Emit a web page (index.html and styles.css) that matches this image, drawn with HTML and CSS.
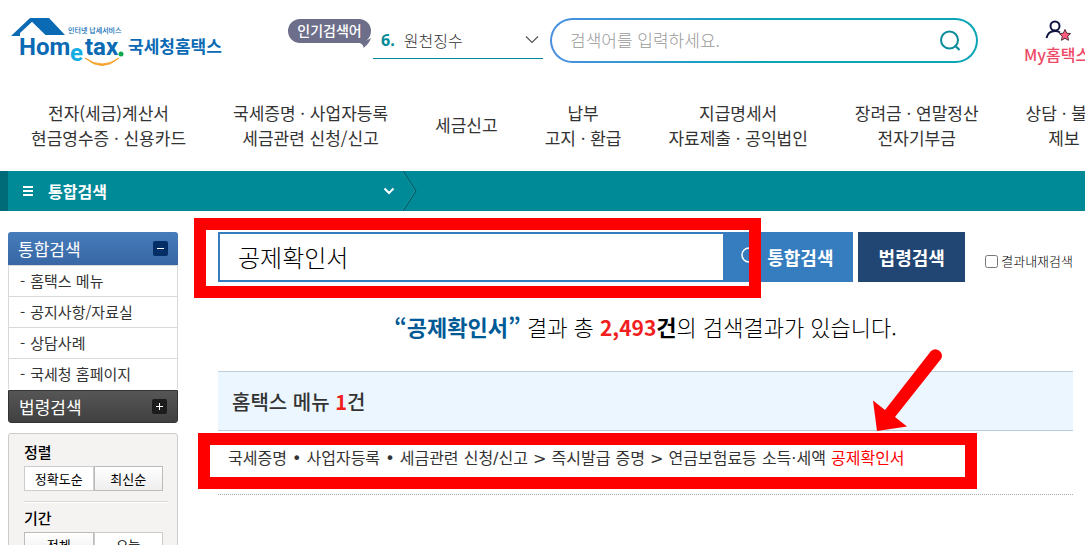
FILE: index.html
```html
<!DOCTYPE html>
<html lang="ko">
<head>
<meta charset="utf-8">
<title>통합검색 | 국세청 홈택스</title>
<link rel="stylesheet" href="styles.css">
</head>
<body>
<div class="page">
  <header class="top">
    <a class="logo" href="#" aria-label="국세청홈택스">
      <svg width="212" height="54" viewBox="0 0 212 54">
        <path d="M0 21 L19 3 H38 L54 20 H34.500 L21 7 L9 18 V21Z" fill="#0a6ab4"/>
        <path d="M9 20 L21 7.500 L33 20" fill="none" stroke="#fff" stroke-width="1"/>
        <text class="logo-sub" x="57" y="18">인터넷 납세서비스</text>
        <text class="logo-en" x="8" y="40">Hom</text>
        <text class="logo-en logo-e" x="59" y="46">e</text>
        <text class="logo-en" x="74" y="40">tax</text>
        <circle cx="110" cy="39" r="2.500" fill="#12a84c"/>
        <path d="M74 43 Q91 55 108 43 Q91 58 74 43Z" fill="#f5a32c" stroke="#f5a32c"/>
        <text class="logo-ko" x="117" y="38">국세청홈택스</text>
      </svg>
    </a>
    <div class="popular">
      <span class="bubble">인기검색어
        <svg class="bubble-tail" width="14" height="10" viewBox="0 0 14 10"><path d="M0 4 Q8 4 14 0 Q12 6 6.500 10 Q7 6 0 4Z" fill="#6d6e8a"/></svg>
      </span>
      <button class="keyword" type="button" aria-haspopup="listbox">
        <strong>6.</strong><span>원천징수</span>
        <svg width="14" height="9" viewBox="0 0 14 9"><path d="M1 1.500 L7 7.500 L13 1.500" fill="none" stroke="#555" stroke-width="1.200"/></svg>
      </button>
    </div>
    <form class="pill">
      <input type="text" placeholder="검색어를 입력하세요." aria-label="검색어">
      <button type="button" aria-label="검색">
        <svg width="22" height="22" viewBox="0 0 22 22"><circle cx="10.500" cy="10" r="8.500" fill="none" stroke="#0a8c9b" stroke-width="2"/><path d="M16 15.500 L20.500 20" stroke="#0a8c9b" stroke-width="2.200"/></svg>
      </button>
    </form>
    <a class="my" href="#">
      <svg width="26" height="22" viewBox="0 0 26 22"><circle cx="10" cy="6" r="4.500" fill="none" stroke="#10153f" stroke-width="2"/><path d="M1.500 18 Q3 11 10 11 Q13 11 15 12.500" fill="none" stroke="#10153f" stroke-width="2"/><path d="M20 9.500 L21.700 13.200 L25.600 13.600 L22.700 16.300 L23.500 20.300 L20 18.300 L16.500 20.300 L17.300 16.300 L14.400 13.600 L18.300 13.200Z" fill="#ff5c7c" stroke="#4a2a38" stroke-width="1"/></svg>
      <span>My홈택스</span>
    </a>
  </header>

  <nav class="menu">
    <a href="#">전자(세금)계산서<br>현금영수증 · 신용카드</a>
    <a href="#">국세증명 · 사업자등록<br>세금관련 신청/신고</a>
    <a href="#">세금신고</a>
    <a href="#">납부<br>고지 · 환급</a>
    <a href="#">지급명세서<br>자료제출 · 공익법인</a>
    <a href="#">장려금 · 연말정산<br>전자기부금</a>
    <a href="#">상담 · 불복<br>제보</a>
  </nav>

  <div class="crumb">
    <button class="crumb-button" type="button">
      <svg width="10" height="10" viewBox="0 0 10 10"><path d="M0 1H10M0 5H10M0 9H10" stroke="#fff" stroke-width="2"/></svg>
      <span>통합검색</span>
      <svg width="12" height="8" viewBox="0 0 12 8"><path d="M1.500 1.500 L6 6 L10.500 1.500" fill="none" stroke="#fff" stroke-width="2"/></svg>
    </button>
    <svg width="16" height="40" viewBox="0 0 16 40"><path d="M1 0 L14 20 L1 40" fill="none" stroke="#04505a"/><path d="M0 0 L13 20 L0 40" fill="none" stroke="#2aa3ae" stroke-width=".5"/></svg>
  </div>

  <div class="body">
    <aside class="side">
      <div class="side-menu">
        <button class="side-head blue" type="button">통합검색
          <svg width="15" height="15" viewBox="0 0 15 15"><rect width="15" height="15" rx="2" fill="#042f66"/><path d="M4 7.500H11" stroke="#fff"/></svg>
        </button>
        <ul>
          <li><a href="#">홈택스 메뉴</a></li>
          <li><a href="#">공지사항/자료실</a></li>
          <li><a href="#">상담사례</a></li>
          <li><a href="#">국세청 홈페이지</a></li>
        </ul>
        <button class="side-head dark" type="button">법령검색
          <svg width="15" height="15" viewBox="0 0 15 15"><rect width="15" height="15" rx="2" fill="#1c1c1c"/><path d="M4 7.500H11M7.500 4V11" stroke="#fff"/></svg>
        </button>
      </div>
      <div class="filters">
        <section>
          <h3>정렬</h3>
          <div class="pair"><button type="button">정확도순</button><button class="on" type="button">최신순</button></div>
        </section>
        <section>
          <h3>기간</h3>
          <div class="pair"><button class="on" type="button">전체</button><button type="button">오늘</button></div>
        </section>
      </div>
    </aside>

    <main class="main">
      <form class="search">
        <input class="query" type="text" value="공제확인서" aria-label="통합검색어">
        <button class="go" type="button">
          <svg width="20" height="20" viewBox="0 0 20 20"><circle cx="8" cy="8" r="7" fill="none" stroke="#fff" stroke-width="1.500"/><path d="M13 13 L18 18" stroke="#fff" stroke-width="1.500"/></svg>
          통합검색
        </button>
        <button class="law" type="button">법령검색</button>
        <label class="again"><input type="checkbox"><span>결과내재검색</span></label>
      </form>
      <p class="summary"><strong class="term">“공제확인서”</strong> 결과 총 <strong><em>2,493</em>건</strong>의 검색결과가 있습니다.</p>
      <h2 class="group">홈택스 메뉴 <em>1</em>건</h2>
      <p class="result"><a href="#">국세증명 • 사업자등록 • 세금관련 신청/신고 &gt; 즉시발급 증명 &gt; 연금보험료등 소득·세액 <em>공제확인서</em></a></p>
    </main>
  </div>

  <div class="mark mark-search"></div>
  <div class="mark mark-result"></div>
  <svg class="arrow" width="76" height="84" viewBox="0 0 76 84"><path d="M61 3 A6.500 6.500 0 0 1 71 11 L25 69 L37 78.500 L7 83 L3 52.500 L15 62 Z" fill="#f00"/></svg>
</div>
</body>
</html>
```
FILE: styles.css
```css
* { box-sizing: border-box; }
html { overflow: hidden; }
body {
  margin: 0;
  background: #fff;
  color: #000;
  font-family: "Noto Sans CJK KR", sans-serif;
}
a { color: inherit; text-decoration: none; }
button, input { font: inherit; color: inherit; }
button { border: 0; background: none; padding: 0; cursor: pointer; }
h2, h3, p, ul { margin: 0; padding: 0; }
ul { list-style: none; }
em { font-style: normal; }
svg { display: block; flex: none; }
.page { position: relative; overflow: hidden; }

.top {
  display: flex;
  align-items: flex-start;
  padding: 15px 0 0 11px;
  height: 90px;
}
.logo { flex: none; margin-right: 65px; }
.logo-sub { font-size: 7px; font-weight: 500; fill: #0a6ab4; }
.logo-en { font: 700 24px Roboto, sans-serif; fill: #0a6ab4; }
.logo-en.logo-e { fill: #12aee4; }
.logo-ko { font-size: 17px; font-weight: 700; fill: #0a6ab4; }
.popular { display: flex; flex: none; gap: 2px; margin-right: 7px; }
.bubble {
  position: relative;
  width: 83px;
  height: 24px;
  margin-top: 4px;
  border-radius: 12px;
  background: #6d6e8a;
  color: #fff;
  font-size: 14px;
  font-weight: 500;
  line-height: 23px;
  text-align: center;
}
.bubble-tail { position: absolute; right: 0; bottom: -5px; }
.keyword {
  display: flex;
  align-items: center;
  gap: 9px;
  width: 170px;
  height: 36px;
  margin-top: 8px;
  padding: 0 4px 2px 8px;
  border-bottom: 1px solid #008997;
  color: #333;
  font-size: 16px;
  font-weight: 300;
}
.keyword strong { color: #008997; font: 700 16px "Open Sans", sans-serif; }
.keyword svg { margin-left: auto; }
.pill {
  display: flex;
  align-items: center;
  flex: 1;
  height: 45px;
  margin: 3px 46px 0 0;
  padding: 0 15px 0 18px;
  border: 2px solid transparent;
  border-radius: 23px;
  background: linear-gradient(#fff, #fff) padding-box, linear-gradient(90deg, #4a90e2, #0ba5b5 50%) border-box;
}
.pill input { flex: 1; min-width: 0; border: 0; padding: 0 0 2px; outline: 0; font-size: 17px; font-weight: 300; }
.pill input::placeholder { color: #999; opacity: 1; }
.my {
  flex: none;
  width: 61px;
  padding-top: 5px;
  color: #ee4a68;
  font-size: 16px;
  font-weight: 500;
  line-height: 24px;
  white-space: nowrap;
}
.my svg { margin-left: 21px; }

.menu {
  display: flex;
  align-items: center;
  gap: 47px;
  height: 81px;
  padding: 0 0 12px 31px;
  color: #333;
  font-size: 17px;
  line-height: 25px;
  text-align: center;
  white-space: nowrap;
}
.menu a { flex: none; }

.crumb {
  display: flex;
  height: 40px;
  border-left: 8px solid #006b78;
  background: #008997;
}
.crumb-button {
  display: flex;
  align-items: center;
  gap: 15px;
  width: 394px;
  padding: 0 7px 0 15px;
  color: #fff;
  font-size: 16px;
  font-weight: 700;
}
.crumb-button svg:last-child { margin-left: auto; }

.body {
  display: flex;
  gap: 40px;
  padding: 21px 12px 0 8px;
}
.side { flex: none; width: 170px; }
.side-head {
  display: flex;
  align-items: center;
  justify-content: space-between;
  width: 100%;
  height: 33px;
  padding: 0 10px;
  color: #fff;
  font-size: 17px;
}
.blue { border-radius: 3px 3px 0 0; background: linear-gradient(#467cbb, #3867a4); }
.dark { border: 1px solid #333; border-radius: 0 0 3px 3px; background: linear-gradient(#565656, #404040); }
.side li {
  height: 31px;
  padding-left: 11px;
  border: 1px solid #d9d9d9;
  border-bottom: 0;
  color: #333;
  font-size: 15px;
  line-height: 29px;
}
.side li::before { content: "-"; margin-right: 5px; }
.side ul { padding-bottom: 1px; }
.filters {
  margin-top: 10px;
  padding: 5px 9px 12px 15px;
  border: 1px solid #ccc;
  border-radius: 3px;
  background: #f4f3f2;
}
.filters section + section { margin-top: 10px; padding-top: 3px; border-top: 1px solid #d9d9d9; box-shadow: inset 0 1px #fff; }
.filters h3 { padding-bottom: 2px; font-size: 15px; font-weight: 500; line-height: 25px; }
.pair { display: flex; padding-right: 5px; }
.pair button {
  flex: 1;
  height: 25px;
  border: 1px solid #ccc;
  background: #fff;
  font-size: 13px;
  line-height: 23px;
}
.pair .on { border-color: #bbb; background: linear-gradient(#fff, #eee); }

.main { flex: 1; min-width: 0; }
.search { display: flex; height: 50px; }
.query {
  flex: 1;
  min-width: 0;
  padding: 0 18px 2px;
  border: 2px solid #357dbf;
  border-radius: 0;
  outline: 0;
  background: #fff;
  font-size: 24px;
  font-weight: 300;
}
.go, .law { flex: none; color: #fff; font-size: 18px; font-weight: 700; }
.go {
  display: flex;
  align-items: center;
  gap: 6px;
  width: 128px;
  padding-left: 16px;
  background: #357dbf;
}
.law { width: 107px; margin: 0 20px 0 5px; background: #214674; }
.again { display: flex; align-items: center; gap: 3px; flex: none; padding-top: 6px; font-size: 13px; font-weight: 300; white-space: nowrap; }
.again input { width: 13px; height: 13px; margin: 3px 0 0; }
.summary {
  padding-top: 24px;
  height: 89px;
  font-size: 22px;
  font-weight: 300;
  line-height: 40px;
  text-align: center;
}
.summary strong { font-weight: 700; }
.summary .term { color: #005a96; }
.summary em, .group em { color: #f11e1e; }
.summary em { font-size: 21px; }
.group {
  height: 60px;
  padding-left: 14px;
  border: solid #bccddb;
  border-width: 1px 0;
  background: #ebf6ff;
  color: #333;
  font-size: 20px;
  font-weight: 500;
  line-height: 60px;
}
.group em { font-weight: 700; }
.result {
  height: 64px;
  padding-left: 10px;
  border-bottom: 1px dotted #aaa;
  color: #333;
  font-family: "DejaVu Sans", "Noto Sans CJK KR", sans-serif;
  font-size: 16px;
  line-height: 56px;
  white-space: nowrap;
}
.result em { color: #f00; }

.mark { position: absolute; border: 12px solid #f00; pointer-events: none; }
.mark-search { left: 194px; top: 218px; width: 567px; height: 80px; }
.mark-result { left: 198px; top: 433px; width: 779px; height: 56px; }
.arrow { position: absolute; left: 870px; top: 348px; pointer-events: none; }
```
